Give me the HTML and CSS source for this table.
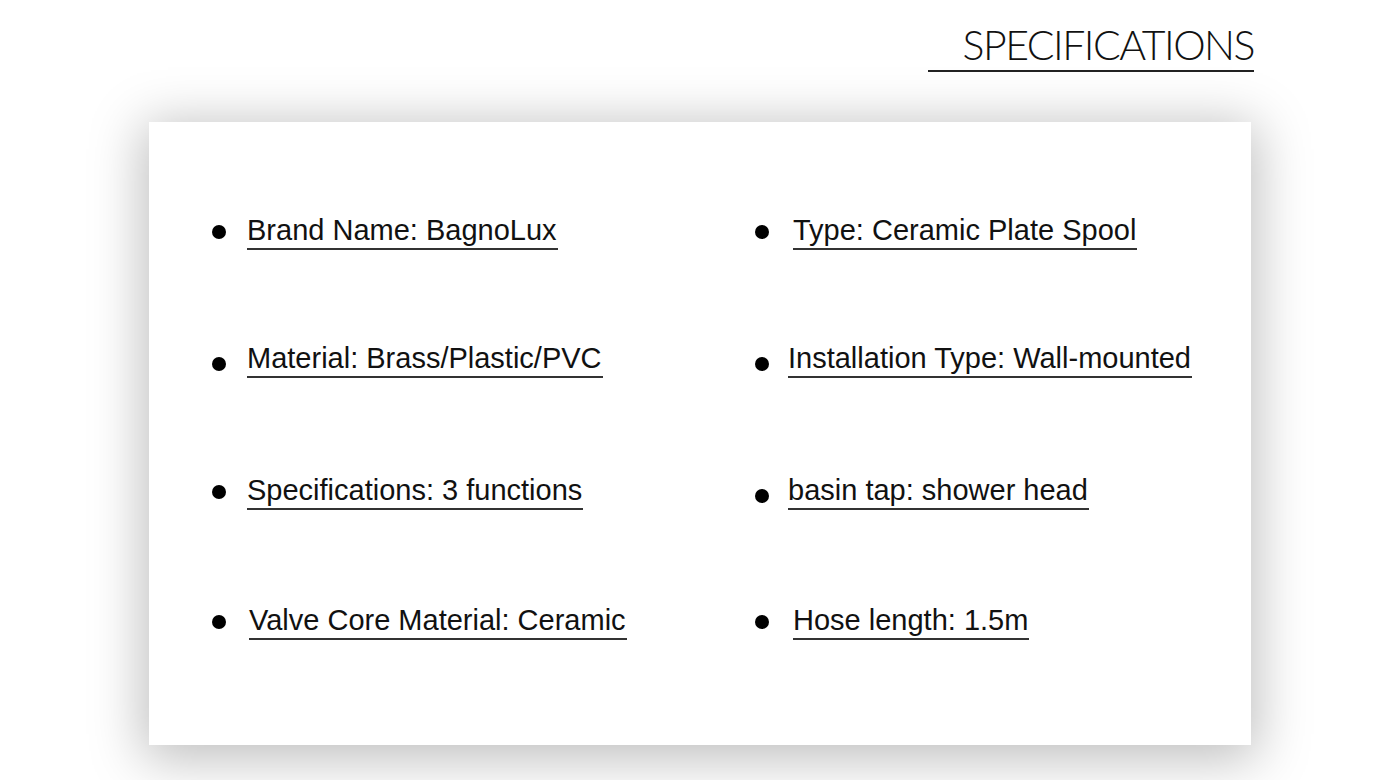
FILE: index.html
```html
<!DOCTYPE html>
<html lang="en">
<head>
<meta charset="utf-8">
<title>Specifications</title>
<link rel="stylesheet" href="styles.css">
</head>
<body>
<header class="head">
  <h1 class="title">SPECIFICATIONS</h1>
</header>
<main class="card">
  <ul class="specs">
    <li class="item"><span class="dot"></span><span class="txt">Brand Name: BagnoLux</span></li>
    <li class="item item-r gap-wide"><span class="dot"></span><span class="txt">Type: Ceramic Plate Spool</span></li>
    <li class="item drop up"><span class="dot"></span><span class="txt">Material: Brass/Plastic/PVC</span></li>
    <li class="item item-r drop up"><span class="dot"></span><span class="txt">Installation Type: Wall-mounted</span></li>
    <li class="item"><span class="dot"></span><span class="txt">Specifications: 3 functions</span></li>
    <li class="item item-r drop"><span class="dot"></span><span class="txt">basin tap: shower head</span></li>
    <li class="item gap-mid"><span class="dot"></span><span class="txt">Valve Core Material: Ceramic</span></li>
    <li class="item item-r gap-wide"><span class="dot"></span><span class="txt">Hose length: 1.5m</span></li>
  </ul>
</main>
</body>
</html>
```

FILE: styles.css
```css
html, body {
  margin: 0;
  padding: 0;
  background: #ffffff;
}
body {
  width: 1400px;
  height: 780px;
  overflow: hidden;
  font-family: "Liberation Sans", Arial, sans-serif;
  color: #111;
}
.head {
  display: flex;
  justify-content: flex-end;
  padding: 22px 146px 0 0;
  height: 122px;
  box-sizing: border-box;
}
.title {
  margin: 0;
  height: 48px;
  padding: 0 0 0 35px;
  font-family: "Lato", "Open Sans", sans-serif;
  font-weight: 300;
  font-size: 41px;
  line-height: 46px;
  letter-spacing: -1.5px;
  color: #111;
  border-bottom: 2px solid #222;
  text-align: right;
}
.card {
  margin: 0 0 0 149px;
  width: 1102px;
  height: 623px;
  background: #fff;
  box-shadow: 0 8px 50px 6px rgba(0, 0, 0, 0.26);
}
.specs {
  list-style: none;
  margin: 0;
  padding: 92px 0 0 63px;
  display: grid;
  grid-template-columns: 543px 1fr;
  grid-auto-rows: 130px;
}
.item {
  display: flex;
  align-items: flex-start;
  gap: 21px;
  height: 44px;
}
.up {
  margin-top: -2px;
}
.dot {
  flex: none;
  width: 14px;
  height: 14px;
  border-radius: 50%;
  background: #000;
  margin-top: 11px;
}
.drop .dot {
  margin-top: 15px;
}
.gap-mid {
  gap: 23px;
}
.item-r {
  gap: 19px;
}
.item-r.gap-wide {
  gap: 24px;
}
.txt {
  font-size: 29px;
  line-height: 32px;
  padding: 0 1px 2px 0;
  border-bottom: 2px solid #333;
  color: #111;
  white-space: nowrap;
}
```
